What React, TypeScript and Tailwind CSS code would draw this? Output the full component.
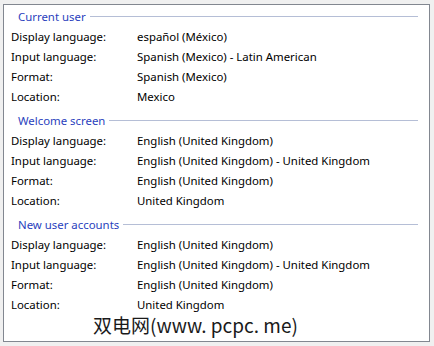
import React from 'react';

interface Row {
  label: string;
  value: string;
}

interface Section {
  title: string;
  rows: Row[];
}

const sections: Section[] = [
  {
    title: 'Current user',
    rows: [
      { label: 'Display language:', value: 'español (México)' },
      { label: 'Input language:', value: 'Spanish (Mexico) - Latin American' },
      { label: 'Format:', value: 'Spanish (Mexico)' },
      { label: 'Location:', value: 'Mexico' },
    ],
  },
  {
    title: 'Welcome screen',
    rows: [
      { label: 'Display language:', value: 'English (United Kingdom)' },
      { label: 'Input language:', value: 'English (United Kingdom) - United Kingdom' },
      { label: 'Format:', value: 'English (United Kingdom)' },
      { label: 'Location:', value: 'United Kingdom' },
    ],
  },
  {
    title: 'New user accounts',
    rows: [
      { label: 'Display language:', value: 'English (United Kingdom)' },
      { label: 'Input language:', value: 'English (United Kingdom) - United Kingdom' },
      { label: 'Format:', value: 'English (United Kingdom)' },
      { label: 'Location:', value: 'United Kingdom' },
    ],
  },
];

const App: React.FC = () => {
  return (
    <div
      className="w-[434px] h-[346px] bg-[#f0f0f0] pt-[4px] pl-[3px] overflow-hidden"
      style={{ fontFamily: '"Segoe UI", "Noto Sans", Arial, sans-serif' }}
    >
      <div className="relative w-[427px] h-[338px] bg-white border border-[#828790] pt-[1px] text-[11.4px] text-black">
        {sections.map((section, i) => (
          <div key={section.title} className={i > 0 ? 'mt-[3px]' : ''}>
            {/* Group header */}
            <div className="flex items-center h-[21px] pl-[14px] pr-[11px]">
              <span className="text-[#2a3fbd] leading-none">{section.title}</span>
              <div className="flex-1 h-px bg-[#b5bed6] ml-[4px]" />
            </div>
            {section.rows.map((row) => (
              <div key={row.label} className="flex items-center h-[20px] pl-[7px]">
                <span className="w-[126px] leading-none">{row.label}</span>
                <span className="leading-none whitespace-nowrap">{row.value}</span>
              </div>
            ))}
          </div>
        ))}

        {/* Watermark */}
        <div
          className="absolute left-[89px] top-[310px] text-[19px] leading-none text-[#1a1a1a] whitespace-nowrap"
          style={{ fontFamily: '"Noto Sans CJK SC", "Liberation Sans", sans-serif' }}
        >
          双电网(www. pcpc. me)
        </div>
      </div>
    </div>
  );
};

export default App;
